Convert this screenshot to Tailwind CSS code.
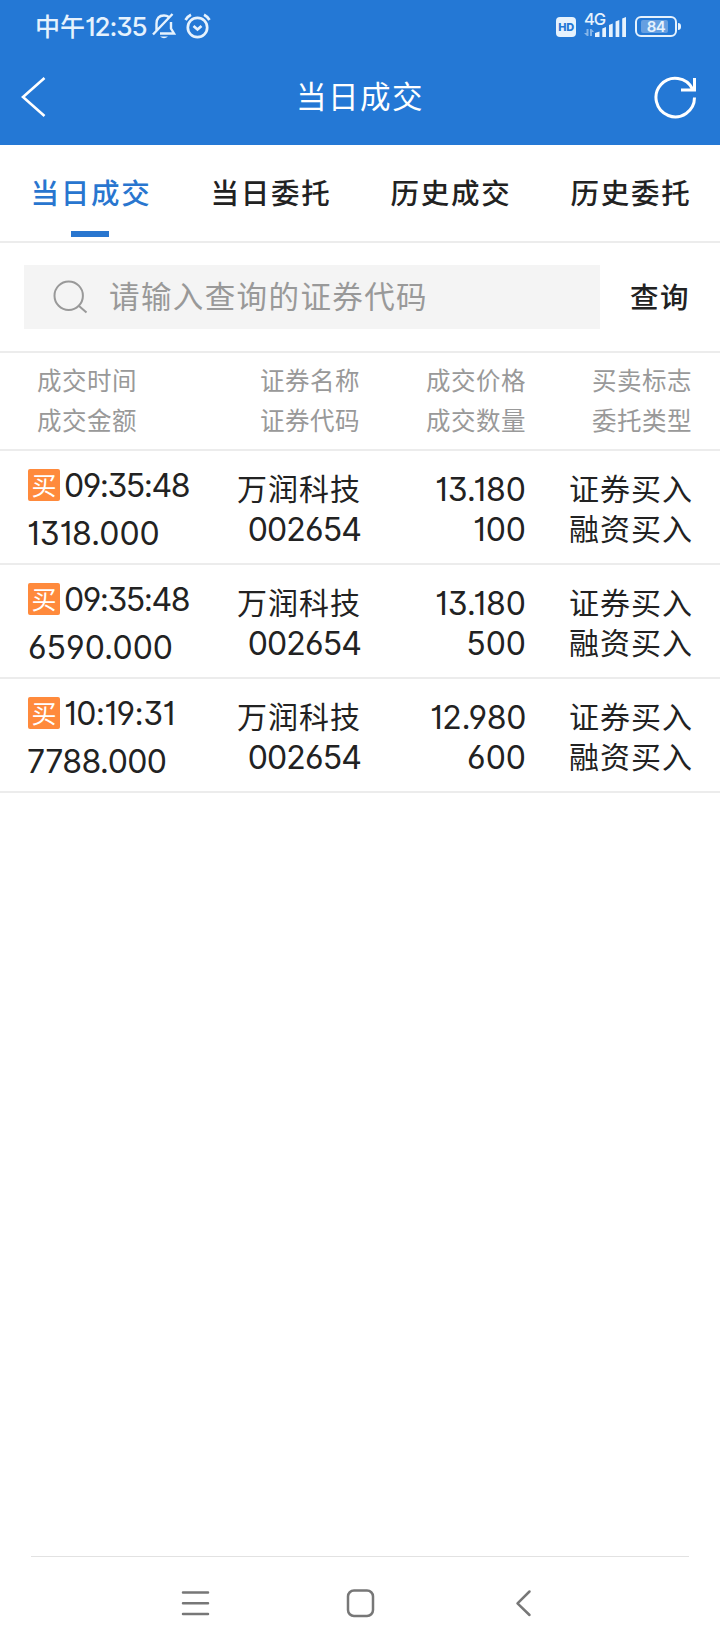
<!DOCTYPE html>
<html lang="zh-CN">
<head>
    <meta charset="UTF-8">
    <meta name="viewport" content="width=device-width, initial-scale=1.0">
    <title>当日成交</title>
    <script src="https://cdn.jsdelivr.net/npm/@tailwindcss/browser@4"></script>
</head>
<body class="w-[720px] h-[1650px] flex flex-col bg-white text-[#222] font-['Inter','Noto_Sans_CJK_SC',sans-serif] [font-feature-settings:'cv01','cv03','cv04','cv09'] whitespace-nowrap overflow-hidden">

    <header class="h-[145px] shrink-0 bg-[#2478d5] text-white">
        <!-- Status bar -->
        <div class="h-[52px] flex items-center pl-[35px] pr-[43px] text-[#e6f2fd]">
            <div class="w-[117px] flex items-center text-[25px] leading-[52px] font-medium"><span class="font-['Noto_Sans_CJK_SC'] -mt-[2px]">中午</span><span class="text-[26px] tracking-[-1.1px] mt-px">12:35</span></div>
            <svg class="w-6 h-7" viewBox="0 0 24 28" fill="none" stroke="currentColor" stroke-width="2.400">
                <path d="M4.500 19V12C4.500 6 7.500 3.500 12 3.500C14 3.500 15.500 4 16.800 5M19 10V16.500L22 21.500H8M1 22.500L20.500 2"/>
                <path d="M8 24.500H16Q12 28 8 24.500Z" fill="currentColor" stroke="none"/>
            </svg>
            <svg class="w-[27px] h-7 ml-2" viewBox="0 0 27 28" fill="none" stroke="currentColor" stroke-width="2.700">
                <circle cx="13.500" cy="15.500" r="9.700"/>
                <path d="M9.500 14L13.500 17.500L17.500 14M1.500 8Q3.500 4.500 7 2.800M25.500 8Q23.500 4.500 20 2.800"/>
            </svg>
            <div class="ml-auto mt-[2px] w-5 h-5 rounded-[4px] bg-[#e6f2fd] text-[#2478d5] text-[11px] leading-5 font-extrabold text-center tracking-[-0.3px]">HD</div>
            <div class="relative ml-2 w-[43px] h-[26px]">
                <span class="absolute left-0 -top-[3px] text-[16.5px] leading-[18px] font-medium tracking-[-1px]">4G</span>
                <svg class="w-[43px] h-[26px]" viewBox="0 0 43 26" fill="currentColor">
                    <path opacity=".5" d="M2.500 16H4.500V23H3L0 20H2.500ZM6 16H7.500L10 19H8V23H6Z"/>
                    <path d="M11 20L15.500 18.500V24H11ZM18.300 15.500L22 14V24H18.300ZM25 12L28.700 10.500V24H25ZM31.600 8.500L35.300 7V24H31.600ZM38.200 5.500L42 4V24H38.200Z"/>
                </svg>
            </div>
            <div class="ml-2 mt-px relative w-[42px] h-[21px] rounded-[6px] border-2 border-current flex items-center justify-center">
                <div class="absolute left-1 top-[2px] w-[27px] h-[13px] rounded-[2px] bg-[#659fe1]"></div>
                <span class="relative text-[15px] leading-none font-semibold tracking-[-0.5px]">84</span>
            </div>
            <div class="ml-[1px] w-[3px] h-[7px] -mr-1 rounded-r-sm bg-current"></div>
        </div>
        <!-- Title bar -->
        <div class="h-[90px] flex items-center justify-between px-5">
            <svg class="w-[60px] h-11" viewBox="0 0 60 44" fill="none" stroke="currentColor" stroke-width="2.600">
                <path d="M24.500 3L3 22L24.500 41"/>
            </svg>
            <h1 class="-mt-[2px] text-[30.5px] tracking-[1.5px] font-['Noto_Sans_CJK_SC']">当日成交</h1>
            <div class="w-[60px] flex justify-end">
                <svg class="w-[46px] h-11" viewBox="0 0 46 44" fill="none" stroke="currentColor" stroke-width="3">
                    <path d="M40.500 22.500A19.250 19.250 0 1 1 38.500 14M40.500 3V15H27"/>
                </svg>
            </div>
        </div>
    </header>

    <nav class="h-[98px] shrink-0 grid grid-cols-4 border-b-2 border-[#ececec] text-[28.5px] leading-[94px] tracking-[1.7px] indent-[2px] font-medium text-center font-['Noto_Sans_CJK_SC']">
        <a class="relative text-[#2976cf]">当日成交<span class="absolute left-[71px] top-[86px] w-[38px] h-[6px] bg-[#2976cf]"></span></a>
        <a>当日委托</a>
        <a>历史成交</a>
        <a>历史委托</a>
    </nav>

    <section class="h-[110px] shrink-0 flex items-center pl-6 border-b-2 border-[#ececec] font-['Noto_Sans_CJK_SC']">
        <div class="w-[576px] h-16 flex items-center pl-[29px] bg-[#f4f4f4] text-[#999]">
            <svg class="w-9 h-9" viewBox="0 0 36 36" fill="none" stroke="currentColor" stroke-width="2">
                <circle cx="15.700" cy="16.700" r="14.200"/>
                <path d="M26 27L33.500 33.500"/>
            </svg>
            <span class="ml-5 -mt-[2px] text-[30.5px] tracking-[1.4px]">请输入查询的证券代码</span>
        </div>
        <button class="ml-[30px] -mt-[2px] text-[28.5px] tracking-[1.5px] font-medium">查询</button>
    </section>

    <main>
        <div class="h-[98px] grid grid-cols-[190px_170px_166px_166px] pt-[7px] border-b-2 border-[#ececec] text-[24.5px] leading-10 tracking-[0.5px] text-[#999] text-right font-['Noto_Sans_CJK_SC']">
            <div class="pl-[37px] text-left">成交时间<br>成交金额</div>
            <div>证券名称<br>证券代码</div>
            <div>成交价格<br>成交数量</div>
            <div>买卖标志<br>委托类型</div>
        </div>

        <div class="h-[114px] grid grid-cols-[190px_171px_166px_166px] border-b-2 border-[#ececec] text-[32px] text-right">
            <div class="pl-7 pt-[10px] text-left">
                <div class="h-12 flex items-center"><span class="shrink-0 w-8 h-8 mr-1 rounded-[2px] bg-[#ff8a3c] text-white text-[25px] leading-[30px] text-center font-['Noto_Sans_CJK_SC']">买</span><span class="pt-[2px] leading-10 tracking-[-1.5px]">09:35:48</span></div>
                <div class="pt-px leading-[48px] tracking-[-0.1px] -ml-px">1318.000</div>
            </div>
            <div class="pt-4 leading-10"><div class="text-[30px] tracking-[1px] font-['Noto_Sans_CJK_SC']">万润科技</div><div class="pt-[3px] tracking-[-0.9px]">002654</div></div>
            <div class="pt-[19px] pr-px leading-10">13.180<br>100</div>
            <div class="pt-4 leading-10 text-[30px] tracking-[1px] font-['Noto_Sans_CJK_SC']">证券买入<br>融资买入</div>
        </div>

        <div class="h-[114px] grid grid-cols-[190px_171px_166px_166px] border-b-2 border-[#ececec] text-[32px] text-right">
            <div class="pl-7 pt-[10px] text-left">
                <div class="h-12 flex items-center"><span class="shrink-0 w-8 h-8 mr-1 rounded-[2px] bg-[#ff8a3c] text-white text-[25px] leading-[30px] text-center font-['Noto_Sans_CJK_SC']">买</span><span class="pt-[2px] leading-10 tracking-[-1.5px]">09:35:48</span></div>
                <div class="pt-px leading-[48px]">6590.000</div>
            </div>
            <div class="pt-4 leading-10"><div class="text-[30px] tracking-[1px] font-['Noto_Sans_CJK_SC']">万润科技</div><div class="pt-[3px] tracking-[-0.9px]">002654</div></div>
            <div class="pt-[19px] pr-px leading-10">13.180<br>500</div>
            <div class="pt-4 leading-10 text-[30px] tracking-[1px] font-['Noto_Sans_CJK_SC']">证券买入<br>融资买入</div>
        </div>

        <div class="h-[114px] grid grid-cols-[190px_171px_166px_166px] border-b-2 border-[#ececec] text-[32px] text-right">
            <div class="pl-7 pt-[10px] text-left">
                <div class="h-12 flex items-center"><span class="shrink-0 w-8 h-8 mr-1 rounded-[2px] bg-[#ff8a3c] text-white text-[25px] leading-[30px] text-center font-['Noto_Sans_CJK_SC']">买</span><span class="pt-[2px] leading-10 tracking-[-0.6px]">10:19:31</span></div>
                <div class="pt-px leading-[48px] tracking-[-0.6px] -ml-px">7788.000</div>
            </div>
            <div class="pt-4 leading-10"><div class="text-[30px] tracking-[1px] font-['Noto_Sans_CJK_SC']">万润科技</div><div class="pt-[3px] tracking-[-0.9px]">002654</div></div>
            <div class="pt-[19px] pr-px leading-10"><span class="tracking-[-0.4px]">12.980</span><br>600</div>
            <div class="pt-4 leading-10 text-[30px] tracking-[1px] font-['Noto_Sans_CJK_SC']">证券买入<br>融资买入</div>
        </div>
    </main>

    <!-- System navigation -->
    <footer class="mt-auto mx-[31px] h-[94px] shrink-0 border-t border-[#e2e2e2] text-[#777]">
        <svg class="w-[658px] h-[93px]" viewBox="31 1557 658 93" fill="none" stroke="currentColor" stroke-width="2.500" stroke-linecap="round">
            <path d="M183 1592.500H208M183 1603.300H208M183 1614H208"/>
            <rect x="348" y="1590.500" width="25" height="25.500" rx="6"/>
            <path d="M529.500 1591.500L517.500 1603.300L529.500 1615" stroke-linejoin="round"/>
        </svg>
    </footer>
</body>
</html>
